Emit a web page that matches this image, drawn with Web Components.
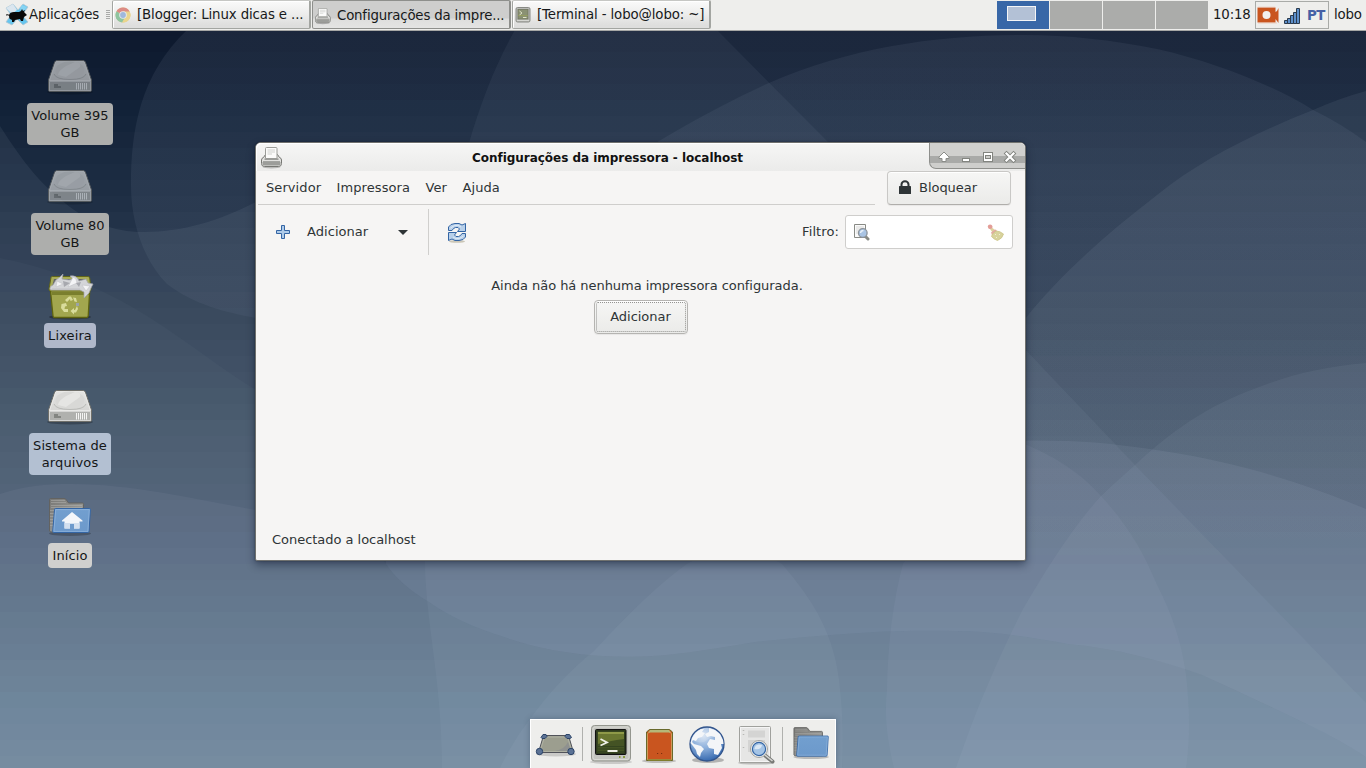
<!DOCTYPE html>
<html lang="pt-BR">
<head>
<meta charset="utf-8">
<title>Xfce</title>
<style>
html,body{margin:0;height:100%;overflow:hidden}
body{font:13.333px/17px "DejaVu Sans",sans-serif;color:#2e3436}
</style>
</head>
<body>
<xfce-desktop></xfce-desktop>
<script>
const define = (tag, css, html, setup) => {
  const t = document.createElement('template');
  t.innerHTML = `<style>*{box-sizing:border-box}${css}</style>${html}`;
  customElements.define(tag, class extends HTMLElement {
    constructor() {
      super();
      this.attachShadow({mode: 'open'}).append(t.content.cloneNode(true));
    }
    connectedCallback() { if (setup) setup.call(this, this.shadowRoot); }
  });
};

const drive = `
<defs><linearGradient id="t" x1="0" y1="0" x2="0" y2="1"><stop offset="0" stop-color="#e4e4e2"/><stop offset="1" stop-color="#cfcfcd"/></linearGradient></defs>
<ellipse cx="24" cy="39" rx="23" ry="2.500" fill="#000" opacity=".25"/>
<path d="M11 7.500H37Q38.600 7.500 39.300 9L45.500 27V37Q45.500 38.500 44 38.500H4Q2.500 38.500 2.500 37V27L8.700 9Q9.400 7.500 11 7.500Z" fill="url(#t)" stroke="#6f6f6a"/>
<path d="M11 8.500H37Q38 8.500 38.400 9.800L44.400 27.500H3.600L9.600 9.800Q10 8.500 11 8.500Z" fill="none" stroke="#e9e9e7"/>
<path d="M3 28.500H45V38H3Z" fill="#b0b1ae"/><path d="M3.500 28.500H44.500V37.500H3.500Z" fill="none" stroke="#d6d6d4"/>
<path d="M8 21Q10 26.500 24 26.500T40 21" fill="none" stroke="#b9bab7"/>
<ellipse cx="24" cy="17" rx="14.500" ry="8.500" fill="#d8d8d6"/>
<path d="M12 22Q12 18 20 13L29 9Q36 10 34 14L20 24Z" fill="#e9e9e7" opacity=".75"/>
<path d="M8 31h4v2h3v2H8z" fill="#838581"/><path d="M30.500 30v6.500M32.500 30v6.500M34.500 30v6.500M36.500 30v6.500M38.500 30v6.500M40.500 30v6.500" stroke="#f4f4f3"/>`;

const folder = extra => `
<defs><linearGradient id="f" x1="0" y1="0" x2="0" y2="1"><stop offset="0" stop-color="#729fcf"/><stop offset="1" stop-color="#6c99cb"/></linearGradient><linearGradient id="g" x1="0" y1="0" x2="1" y2="1"><stop offset="0" stop-color="#787875"/><stop offset="1" stop-color="#a8a8a5"/></linearGradient></defs>
<ellipse cx="24" cy="40.500" rx="21" ry="2.500" fill="#000" opacity=".22"/>
<path d="M3.500 38V6.500Q3.500 5.500 4.500 5.500H18Q19.500 5.500 20.500 7L22.500 10H36.500Q37.500 10 37.500 11.500V39H6Q3.500 39 3.500 38Z" fill="url(#g)" stroke="#636361"/>
<path d="M5 7.500H19M5 9.500H20M5 12.500H36M5 14.500H36M4 17.500H9M4 20.500H9M4 23.500H9M4 26.500H8M4 29.500H8M4 32.500H8" stroke="#b9b9b6" opacity=".45"/>
${extra}`;
const blueFront = `<path d="M9.500 15.500H43.500Q44.500 15.500 44.400 16.500L43 38.500Q42.800 39.500 41.800 39.500H7.600Q6.600 39.500 6.700 38.500L8.500 16.500Q8.600 15.500 9.500 15.500Z" fill="url(#f)" stroke="#3465a4"/><path d="M9.700 16.600H43.300L41.900 38.400H7.900Z" fill="none" stroke="#8fb4dc" stroke-width=".8"/>`;

const printer = `
<ellipse cx="10.500" cy="20" rx="9" ry="1.500" fill="#000" opacity=".22"/>
<path d="M4.500 7.500H16.500L18.500 10.500Q20.500 11 20.500 13V16.500Q20.500 19.500 17.500 19.500H3.500Q.5 19.500 .5 16.500V13Q.5 11 2.500 10.500Z" fill="#e2e2e0" stroke="#767773"/>
<path d="M1.500 15H19.500V16.500Q19.500 18.500 17.500 18.500H3.500Q1.500 18.500 1.500 16.500Z" fill="#9c9d9a"/><path d="M2 14.500H19" stroke="#777874" stroke-width=".6"/>
<path d="M3.500 11.500H17.500V12.800H3.500Z" fill="#8a8b87"/>
<path d="M4.500 11.500V1.500Q4.500 .5 5.500 .5H15Q16 .5 16 1.500V11.500Z" fill="#fbfbfa" stroke="#9b9c98"/>
<path d="M6.500 3H14M6.500 5H14M6.500 7H11" stroke="#d0d1ce"/>`;

const ICONS = {
  drive: [48, 48, drive],
  trash: [48, 48, `
<ellipse cx="24" cy="44" rx="21" ry="2.500" fill="#000" opacity=".3"/>
<path d="M4 13L7 43Q7.200 44.500 8.500 44.500H40.500Q42 44.500 42.200 43L44 13Z" fill="#a2a64e" stroke="#5f6310" stroke-width="1.300"/>
<path d="M5.500 19H43L42.600 22H6Z" fill="#7a7f2d"/>
<path d="M3 16L5 4.500Q5.200 3.500 6.500 3.500H42Q43.500 3.500 43.700 5L45 16Q45.100 18 43.500 18H4.500Q2.800 18 3 16Z" fill="#a9ad58" stroke="#62661a"/>
<path d="M6 14L8 6H40L42 14Z" fill="#66676b"/>
<path d="M4 15Q4 13 7 12L10 7L14 4L17 1L16 6L23 7L27 6L24 3Q31 2 33 8L40 6L42 10L47 11L45 15L43 20L38 25L38 19L34 17H5Q3.500 16.500 4 15Z" fill="#d4d5d8" stroke="#a4a5aa" stroke-width=".7"/>
<path d="M11 8L17 11L10 14ZM27 4Q31 5 31 10L22 14ZM36 12L44 13L40 18ZM6 15.500H34" fill="#f4f4f6" stroke="#c2c3c8" stroke-width=".6"/><path d="M17 8L24 10L18 14ZM30 10L35 9L33 14Z" fill="#a7a8ae"/>
<g fill="#d9dc9b"><path d="M19 27L23 23.500H25L27 27L24.500 28L24 26L21 29Z"/><path d="M27 24.500L30 25L31 29L28.500 28.500Z"/><path d="M15.500 31L20 30L21 33L19 33.500L18.500 36H22V39H18L15 35Z"/><path d="M31 33L32 36L30 39.500H28V41.500L24.500 38L28 35V37H29Z"/></g><path d="M30 30h3v3h-3z" fill="#9aa2a8"/>`],
  home: [48, 48, folder(blueFront + `<path d="M26 19L16 27.500V28.500H18.500V35.500H24V31H28V35.500H33.500V28.500H36.500V27.500Z" fill="#f3f6fa"/><path d="M18.500 30V35.500H24V31H28V35.500H33.500V30" fill="#d3e0ef"/>`)],
  folder: [48, 48, folder(blueFront)],
  printer: [22, 22, printer],
  mouse: [24, 24, `
<path d="M1 5L8 1L13 7L18 1L23 4L17 12L23 19L18 22L12 16L7 22L1 19L6 12Z" fill="#66c5ee" stroke="#b5c7d0" stroke-width=".8"/>
<path d="M1 5L8 1L12 7L7 11Z" fill="#dbe6ef"/><path d="M17 2L22 4L18 9L15 6Z" fill="#86d4f3"/>
<path d="M4 12Q5 9 9 9H14L16 8L17 6L18 8L20 7L19 9L22 12L19 14L18 18H16L15 16L10 17L9 19H7L7 17L5 16Q4 15 4 12Z" fill="#090909"/><path d="M5 13Q3 11 1 12" fill="none" stroke="#111"/>`],
  chrome: [16, 16, `
<circle cx="8" cy="8" r="7.500" fill="#e5d28d"/><path d="M1.500 4.200A7.500 7.500 0 0 0 7.200 15.500L10.500 9.500L8 8Z" fill="#8fc4a0"/><path d="M14.600 4.500A7.500 7.500 0 0 1 7.200 15.500L11 9V4.500Z" fill="#ead58d"/><path d="M8 8L1.500 4.200A7.500 7.500 0 0 1 14.600 4.500H8Z" fill="#dc8b84"/><circle cx="8" cy="8" r="3.800" fill="#e7ebee"/><circle cx="8" cy="8" r="2.900" fill="#9fb8dc"/>`],
  termsmall: [16, 16, `
<rect x="1" y=".5" width="14" height="14.500" rx="1.500" fill="#b9bab6" stroke="#888a85"/><rect x="3" y="2.500" width="10" height="9.500" fill="#8a9173" stroke="#70765f" stroke-width=".8"/><path d="M4.500 4L7 6L4.500 8M8 10.500H11.500" fill="none" stroke="#dfe3c6"/><path d="M3 8h10v1H3z" fill="#9aa355" opacity=".6"/><path d="M2 13.500H14" stroke="#d6d7d3"/>`],
  camera: [22, 18, `
<path d="M.5 1.500H18.500L18.500 6L20 5L21.500 2V17L18.500 13V16.500H.5Z" fill="#c9551f"/><circle cx="9.500" cy="9" r="4" fill="#f2efed"/><path d="M1 1.200H18M1 17H20" stroke="#e7b9a6" stroke-width=".6"/>`],
  signal: [18, 18, `
<g fill="#5d8fca" stroke="#2b3a4c"><path d="M1.500 13.500h3v3h-3zM4.500 11.500h3v5h-3zM7.500 8.500h3v8h-3zM10.500 5.500h3v11h-3zM13.500 1.500h3v15h-3z"/></g>`],
  plus: [16, 16, `<path d="M6.500 1.500H9.500V6.500H14.500V9.500H9.500V14.500H6.500V9.500H1.500V6.500H6.500Z" fill="#aecbe9" stroke="#3465a4"/>`],
  refresh: [20, 21, `
<ellipse cx="10" cy="19.500" rx="8" ry="1.300" fill="#7a7042" opacity=".35"/>
<g fill="#b8d0ea" stroke="#3465a4" stroke-linejoin="round"><path d="M1.500 8.500V5L4 2.500L8 1.500H12L15 3L18.500 1.500V9.500H10.500L12.500 7L11 5.500H8.500L6.500 6.500L5 8.500Z"/><path d="M18.500 11.500V15L16 17.500L12 18.500H8L5 17L1.500 18.500V10.500H9.500L7.500 13L9 14.500H11.500L13.500 13.500L15 11.500Z"/></g><path d="M3.500 6Q7 2.800 11 3.300L14 5M16.500 14Q13 17.200 9 16.700L6 15" fill="none" stroke="#e0ebf6"/>`],
  find: [17, 17, `
<path d="M1.500 .500H12.500V13.500H1.500Z" fill="#fafafa" stroke="#888a85"/><path d="M3 3H11M3 5H11M3 7H7M3 9H7" stroke="#d9d9d7"/>
<path d="M13 13L15 15" stroke="#888a85" stroke-width="3" stroke-linecap="round"/><circle cx="9.800" cy="9" r="4.300" fill="#a9c4e4" stroke="#8b939b" stroke-width="1.300"/><path d="M7.500 9A3 3 0 0 1 10.500 6.500" stroke="#e9f1f9" fill="none" stroke-width="1.400"/>`],
  broom: [17, 17, `
<path d="M.8 2.500Q.8 .5 3 .5Q5.500 .5 5.500 3L5 5L2.500 5Q.8 4.500 .8 2.500Z" fill="#e39d97"/><path d="M3 5L5.500 4L8 6L5.500 8.500Z" fill="#ddd19f"/><path d="M4 8.500L8 5.500L9.500 6L9.500 8L5 11Z" fill="#e2aaa1"/><path d="M5.500 10L9 7Q13 7 16.500 10Q15.500 14.500 10.500 16.500Q7 15.500 4.500 12.500Z" fill="#d8d39d" stroke="#cbc486" stroke-width=".8"/><path d="M8 10l1 1M12 10l1 1M9 13l1 1" stroke="#f1eed2"/>`],
  lock: [14, 15, `<path d="M3.500 7V4.500a3.500 3.200 0 0 1 7 0V7" fill="none" stroke="#2e3436" stroke-width="2"/><rect x="1" y="6" width="12" height="8" rx=".6" fill="#2e3436"/>`],
  desktop: [44, 30, `
<ellipse cx="21" cy="24" rx="20" ry="2.500" fill="#000" opacity=".15"/>
<path d="M8.500 5.500H33.500L38.500 22.500H3.500Z" fill="#9c9e8f" stroke="#51535a"/><path d="M9.500 7H32.500L37 21.500H5Z" fill="none" stroke="#b0b2a4"/><path d="M33 12Q30 19 20 21H36Z" fill="#8f918f"/>
<g fill="#5b7295" stroke="#2c4468"><path d="M6 7.500L8 4.500H11L12 6.500L10 8.500H7Z"/><path d="M30 6.500L31 4.500H34.500L36.500 7.500L35 8.500H32Z"/><circle cx="4.500" cy="21.500" r="3.200"/><circle cx="36" cy="21.500" r="3.200"/></g>`],
  terminal: [44, 44, `
<ellipse cx="22" cy="40" rx="21" ry="2" fill="#000" opacity=".15"/>
<rect x="2.500" y="3.500" width="39" height="35.500" rx="3" fill="#c4c5c0" stroke="#94968f"/><rect x="4" y="5" width="36" height="32.500" rx="2" fill="none" stroke="#d9dad5"/>
<rect x="6.500" y="7.500" width="30.500" height="25" rx="1" fill="#2d3a1d" stroke="#111"/><rect x="8.500" y="9.500" width="26.500" height="21" fill="#445324"/>
<path d="M9 10H35L35 17Q20 19 9 22Z" fill="#6a7731"/><path d="M9 10H35V12H9Z" fill="#8f9a48"/><path d="M9 24.500H35M9 27H35M9 29.500H35" stroke="#34441f"/>
<path d="M11.500 17L18 20.500L11.500 23.500" fill="none" stroke="#eef0e6" stroke-width="1.800"/><path d="M18.500 29H28.500" stroke="#eef0e6" stroke-width="2"/><path d="M30 35h1.500M34 35h2" stroke="#8b9b41" stroke-width="2"/>`],
  cabinet: [36, 40, `
<ellipse cx="18" cy="36" rx="17" ry="2" fill="#000" opacity=".2"/>
<path d="M5.500 35.500V7L8.500 4.500H28.500L31.500 7V35.500Z" fill="#c9551f" stroke="#686a2c"/><path d="M6.500 34.500V8.500L9.500 6.500H27.500L30.500 8.500V34.500Z" fill="none" stroke="#cf9a58"/><path d="M9 5L28 5L30 7.500H7Z" fill="#b5b778"/><path d="M7 35H30" stroke="#87852f" stroke-width="1.500"/><path d="M16 28.500h1.200M20 28.500h1.200" stroke="#7b2f0e"/>`],
  globe: [40, 42, `
<defs><radialGradient id="s" cx=".4" cy=".25" r=".8"><stop offset="0" stop-color="#d6e2f2"/><stop offset=".45" stop-color="#8fb1dc"/><stop offset="1" stop-color="#2d62ab"/></radialGradient></defs>
<ellipse cx="21" cy="36" rx="16" ry="3" fill="#000" opacity=".25"/><circle cx="20" cy="20" r="17" fill="url(#s)" stroke="#33558c" stroke-width="1.300"/>
<path d="M5 14Q8 8 14 5L17 5L15 8L18 9L15 13L11 14L9 17L6 16L5 18L7 20L14 22L17 25L14 29L13 33L10 30L9 26L6 22L3.500 19Z" fill="#f3f5f8"/><path d="M22 4L28 6L33 10L36 16L36.500 20L34 20L35 24L31 31L27 30L27 25L22 24L20 20L23 15L28 16L28 13L24 12L20 13L18 10L22 8Z" fill="#f3f5f8"/><path d="M5 16Q14 21 20 16Q28 10 35 14L31 8Q20 0 9 8Z" fill="#fff" opacity=".15"/>`],
  search: [44, 44, `
<ellipse cx="22" cy="40" rx="18" ry="1.600" fill="#000" opacity=".2"/>
<rect x="5.500" y="3.500" width="31" height="36" rx="1" fill="#e6e6e5" stroke="#a0a19d"/><rect x="6.500" y="4.500" width="29" height="34" fill="none" stroke="#f5f5f5"/>
<path d="M14 7.500h17v7H14zM14 17h7v12h-7zM21 17h10v2H21z" fill="#d4d4d3"/><path d="M9.500 7v1M9.500 11v1M9.500 24v1" stroke="#b9b9b6" stroke-width="1.500"/>
<path d="M30.500 32L38.500 38.500" stroke="#777975" stroke-width="4" stroke-linecap="round"/><path d="M31 32L38.500 38" stroke="#d6d6d4" stroke-width="1.600"/>
<circle cx="25" cy="26" r="8.500" fill="#f2f2f0" stroke="#a3a4a1"/><circle cx="25" cy="26" r="6.600" fill="#a4c4e6" stroke="#3465a4" stroke-width="1.200"/><path d="M20.500 26A5 5 0 0 1 25 21.500L28 22Q27 27.500 20.500 26Z" fill="#dbe8f5"/>`],
  shade: [14, 14, `<path d="M7 2L12 7V8.500H9V11.500H5V8.500H2V7Z" fill="#fff" stroke="#8a8c88" stroke-linejoin="round"/>`],
  minimize: [14, 14, `<rect x="3.500" y="8.500" width="7" height="3" fill="#fff" stroke="#82847f"/>`],
  maximize: [14, 14, `<rect x="2.500" y="2.500" width="9" height="9" fill="#fff" stroke="#82847f"/><rect x="4.500" y="5.500" width="5" height="3" fill="#cfcfcc" stroke="#82847f"/>`],
  close: [14, 14, `<path d="M3.500 3.500L10.500 10.500M10.500 3.500L3.500 10.500" stroke="#82847f" stroke-width="4" stroke-linecap="square"/><path d="M3.500 3.500L10.500 10.500M10.500 3.500L3.500 10.500" stroke="#fff" stroke-width="2.200" stroke-linecap="square"/>`],
  arrow: [12, 8, `<path d="M1 1H11L6 6Z" fill="#2e3436"/>`]
};

define('sys-icon', `:host{display:block;flex:none}svg{display:block}`, ``, function (root) {
  const [w, h, body] = ICONS[this.getAttribute('name')];
  const k = +(this.getAttribute('scale') || 1);
  root.innerHTML += `<svg width="${w * k}" height="${h * k}" viewBox="0 0 ${w} ${h}">${body}</svg>`;
});

define('desk-wallpaper', `:host{display:block;width:1366px;height:768px}svg{display:block}`, `
<svg width="1366" height="768" viewBox="0 0 1366 768">
<defs>
<linearGradient id="fade" gradientUnits="userSpaceOnUse" x1="0" y1="180" x2="0" y2="555"><stop offset="0" stop-color="#c4d0e8"/><stop offset="1" stop-color="#c4d0e8" stop-opacity="0"/></linearGradient>
<linearGradient id="rise" x1="0" y1="0" x2="0" y2="1"><stop offset="0" stop-color="#c6d4e8" stop-opacity="0"/><stop offset="1" stop-color="#c6d4e8" stop-opacity=".06"/></linearGradient>
</defs>
<g id="bands"></g>
<rect x="1020" y="330" width="346" height="225" fill="url(#rise)"/>
<path fill="url(#fade)" opacity=".075" d="M187 30C140 75 131 130 131 185C131 225 145 262 167 284C195 305 225 312 256 318L300 560H1366V30Z"/>
<path fill="url(#fade)" opacity=".065" d="M600 180C640 150 710 110 769 83C850 48 935 35 1023 35C1070 35 1110 40 1157 49C1215 62 1275 86 1313 110Q1340 123 1366 142V560H600Z"/>
<g fill="#c6d4e6">
<path opacity=".075" d="M0 126C25 165 40 182 58 197C85 222 115 232 143 232C185 232 220 220 256 202L1025 319C1060 275 1105 235 1157 195C1200 160 1255 133 1313 110Q1340 98 1366 91V768H0Z"/>
<path opacity=".03" d="M0 258C50 268 95 285 134 308C180 335 215 365 256 390L386 564Q400 585 429 602C450 617 475 628 504 637C535 648 570 654 603 656C625 657 645 657 666 655C695 652 725 647 755 642C785 639 815 636 845 634C880 631 915 630 956 631C990 631 1030 637 1068 644C1115 648 1160 660 1202 675C1240 692 1278 710 1313 727Q1340 740 1366 757V768H0Z"/>
<path opacity=".06" d="M0 494C25 486 45 484 71 484C130 484 190 498 256 510L300 555H1366V768H0Z"/>
<path opacity=".055" d="M515 30C495 65 480 105 469 143L425 560C425 620 442 680 442 768H1366V703L1135 465L828 142L717 30Z"/>
<path opacity=".065" d="M1366 363C1320 367 1285 376 1246 392C1200 410 1165 437 1135 465Q1118 480 1101 496C1068 533 1045 572 1023 609C997 660 975 712 956 768H1366Z"/>
<path opacity=".085" d="M1000 441Q1034 440 1068 441C1095 442 1112 444 1135 447C1175 452 1212 459 1246 468C1292 480 1330 494 1366 509V757Q1340 740 1313 727C1278 710 1240 692 1202 675C1160 660 1115 648 1068 644C1030 637 990 631 956 631C915 630 880 631 845 634C815 636 785 639 755 642C725 647 695 652 666 655C645 657 625 657 603 656C570 654 535 648 504 637C475 628 450 617 429 602Q400 585 386 564V500Z"/>
<path opacity=".06" d="M1000 430L1025 444C1055 457 1080 472 1101 496C1125 522 1143 550 1157 585C1173 615 1182 645 1186 675C1190 710 1190 740 1186 768H894C885 730 885 710 887 689Q888 620 903 564Z"/>
<path opacity=".065" d="M500 768Q512 742 530 719C548 694 570 670 594 651Q650 590 687 564Q735 535 782 564Q806 592 818 614C832 640 838 665 840 689Q844 725 842 768Z"/>
</g></svg>`, function (root) {
  const stops = [[30,14,25,46],[90,17,32,54],[150,25,41,63],[230,36,52,74],[330,50,66,87],[430,64,81,102],[520,75,93,116],[620,86,108,131],[700,97,121,143],[768,106,130,150]];
  let out = '';
  for (let y = 20; y < 768; y += 16) {
    let i = 0;
    while (i < stops.length - 2 && stops[i + 1][0] < y) i++;
    const a = stops[i], b = stops[i + 1];
    const t = Math.min(1, Math.max(0, (y - a[0]) / (b[0] - a[0])));
    const c = [1, 2, 3].map(n => Math.round(a[n] + (b[n] - a[n]) * t));
    out += `<rect y="${y}" width="1366" height="17" fill="rgb(${c})"/>`;
  }
  root.querySelector('#bands').innerHTML = out;
});

define('task-button', `
:host{display:flex;width:199px;height:29px;margin-right:1px;padding:5px 0 0 2px;gap:6px;border:1px solid #a3a5a1;border-top-color:#c6c7c4;border-right-width:2px;border-radius:2px;background:linear-gradient(#fafafa,#ededec 48%,#dededd 90%);box-shadow:inset 1px 1px #fff;white-space:nowrap;letter-spacing:-.11px;color:#17191a}
:host([active]){background:linear-gradient(#cececd 62%,#dededd 68%,#e4e4e3);box-shadow:none;border-color:#8e8f8c;padding-top:6px;letter-spacing:-.18px}
sys-icon{width:16px;height:16px;margin-top:1px}
`, `<span><slot></slot></span>`, function (root) {
  const icon = document.createElement('sys-icon');
  icon.setAttribute('name', this.getAttribute('icon'));
  if (this.getAttribute('icon') === 'printer') icon.setAttribute('scale', '.75');
  root.querySelector('span').before(icon);
});

define('workspace-pager', `
:host{display:flex;gap:1px;height:28px}
i{display:block;width:52px;background:#abacaa;padding:5px 0 0 10px}i:first-of-type{background:#3867a7}
b{display:block;width:29px;height:15px;background:#b3c1d6;border:1px solid #f4f5f7}`, `<i><b></b></i><i></i><i></i><i></i>`);

define('top-panel', `
:host{display:flex;align-items:flex-start;height:31px;background:#eeeeec;border-bottom:1px solid #a6a7a5;color:#17191a;box-sizing:border-box}
.apps{display:flex;width:112px;padding:3px 0 0 5px}.apps span{padding:3px 0 0 0;width:77px;letter-spacing:-.1px}
.grip{width:4px;height:10px;margin-top:7px;background:repeating-linear-gradient(#a9aaa8 0 1px,transparent 1px 2px)}
workspace-pager{margin:1px 5px 0 auto}
.t{padding-top:6px;letter-spacing:-.15px;width:42px}
.tray{display:flex;width:74px;height:28px;margin:1px 5px 0 0;border:1px solid #a9aba8;padding:4px 0 0 1px}
.tray sys-icon+sys-icon{margin:1px 0 0 4px}
.tray b{margin:1px 0 0 6px;color:#4560a5;letter-spacing:-.4px}
.u{width:32px;white-space:nowrap}
`, `
<div class="apps"><sys-icon name="mouse"></sys-icon><span>Aplicações</span><div class="grip"></div></div>
<task-button icon="chrome">[Blogger: Linux dicas e ...</task-button>
<task-button icon="printer" active>Configurações da impre...</task-button>
<task-button icon="termsmall">[Terminal - lobo@lobo: ~]</task-button>
<workspace-pager></workspace-pager>
<span class="t">10:18</span>
<div class="tray"><sys-icon name="camera"></sys-icon><sys-icon name="signal"></sys-icon><b>PT</b></div>
<span class="t u">lobo</span>`);

define('desktop-icon', `
:host{display:flex;flex-direction:column;align-items:center;width:110px;height:110px;text-align:center;color:#141617;font-size:13px;letter-spacing:.12px}
:host([dim]){letter-spacing:0}
.i{height:52px;padding-top:2px}:host([dim]) .i{opacity:.66}
.l{padding:4px 4px;border-radius:4px;background:var(--label,#b1bacb);line-height:17px;white-space:pre-line}
`, `<div class="i"></div><div class="l"><slot></slot></div>`, function (root) {
  root.querySelector('.i').innerHTML = `<sys-icon name="${this.getAttribute('icon')}"></sys-icon>`;
});

define('gtk-button', `
:host{display:flex;align-items:center;border:1px solid #c9c8c6;border-bottom-color:#b0aeab;border-radius:4px;background:linear-gradient(#f6f6f5,#ececea 90%);box-shadow:0 1px 1px rgba(0,0,0,.06),inset 0 1px #fff}`, `<slot></slot>`);

define('app-window', `
:host{display:flex;flex-direction:column;width:771px;height:419px;border:1px solid #70716e;border-radius:6px 6px 2px 2px;background:#f6f5f4;box-shadow:0 4px 9px rgba(5,14,35,.42),0 0 2px rgba(0,0,0,.4);box-sizing:border-box;font-size:13px;letter-spacing:-.03px}
header{display:flex;height:28px;background:linear-gradient(#f6f6f5,#ebebea);border-radius:5px 5px 0 0;box-shadow:inset 1px 1px #fff}
header>sys-icon{margin:4px 0 0 5px}
h1{margin:7px 0 0;flex:1;text-align:center;text-indent:3px;font:bold 12px/17px "DejaVu Sans",sans-serif;color:#111}
.ctl{display:flex;gap:8px;width:96px;height:26px;padding:7px 0 0 7px;border:1px solid #8e8f8c;border-width:0 0 1px 1px;border-radius:0 5px 0 7px;background:linear-gradient(#d0d0ce 54%,#a9aaa8 54% 82%,#cececc 82%)}
.menu{display:flex;height:34px}
nav{display:flex;width:617px;height:34px;margin-left:2px;padding:8px 0 0 8px;gap:15.500px;border-bottom:1px solid #cfcecc;letter-spacing:.08px}
.lock{width:124px;height:34px;margin:0 0 0 12px;padding:0 0 2px 10px;gap:7px}
.bar{display:flex;height:55px;padding-left:19px}
.bar>.p{margin-top:19px}.bar>.add{margin:18px 0 0 16px;width:90px;letter-spacing:.05px}.bar>.ar{margin-top:24px}
.sep{width:1px;height:46px;margin:4px 0 0 19px;background:#d0cfcd}
.bar>.re{margin:17px 0 0 18px}
.fl{margin:18px 6px 0 auto;letter-spacing:.1px}
.entry{display:flex;justify-content:space-between;width:168px;height:34px;margin:10px 12px 0 0;padding:8px 8px 0 7px;border:1px solid #cfcecc;border-radius:3px;background:#fff}
main{display:flex;flex-direction:column;align-items:center;flex:1;padding-top:17px}
main span{padding-left:13px;letter-spacing:-.05px}
main gtk-button{width:94px;height:34px;margin-top:6px;padding-bottom:2px;justify-content:center;position:relative;border-color:#b5b4b1}
main gtk-button::before{content:"";position:absolute;inset:1px;border:1px dotted #8a8a87;border-radius:2px;opacity:.9}
footer{padding:0 0 12px 16px}
`, `
<header><sys-icon name="printer"></sys-icon><h1>Configurações da impressora - localhost</h1><div class="ctl"><sys-icon name="shade"></sys-icon><sys-icon name="minimize"></sys-icon><sys-icon name="maximize"></sys-icon><sys-icon name="close"></sys-icon></div></header>
<div class="menu"><nav><span>Servidor</span><span>Impressora</span><span>Ver</span><span>Ajuda</span></nav>
<gtk-button class="lock"><sys-icon name="lock"></sys-icon><span>Bloquear</span></gtk-button></div>
<div class="bar"><sys-icon class="p" name="plus"></sys-icon><span class="add">Adicionar</span><sys-icon class="ar" name="arrow"></sys-icon><div class="sep"></div><sys-icon class="re" name="refresh"></sys-icon>
<span class="fl">Filtro:</span><div class="entry"><sys-icon name="find"></sys-icon><sys-icon name="broom"></sys-icon></div></div>
<main><span>Ainda não há nenhuma impressora configurada.</span><gtk-button>Adicionar</gtk-button></main>
<footer>Conectado a localhost</footer>`);

define('launch-dock', `
:host{display:flex;width:306px;height:49px;padding-left:4px;border:1px solid #fff;border-bottom:0;background:#eeeeec;box-shadow:0 0 6px rgba(20,35,60,.3);box-sizing:border-box}
hr{flex:none;width:1px;height:34px;margin:7px 0 0;border:0;background:#b0b1ae}
`, `
<sys-icon name="desktop" style="margin:10px 3px 0 0"></sys-icon><hr>
<sys-icon name="terminal" style="margin:2px 0 0 6px"></sys-icon>
<sys-icon name="cabinet" style="margin:5px 0 0 8px"></sys-icon>
<sys-icon name="globe" style="margin:4px 0 0 10px"></sys-icon>
<sys-icon name="search" style="margin:3px 0 0 7px"></sys-icon><hr style="margin-left:4px">
<sys-icon name="folder" scale=".84" style="margin:3px 0 0 8px"></sys-icon>`);

define('xfce-desktop', `
:host{display:block;position:relative;width:1366px;height:768px;overflow:hidden}
desk-wallpaper,top-panel,desktop-icon,app-window,launch-dock{position:absolute}
top-panel{left:0;top:0;width:1366px}
desktop-icon{left:15px}
app-window{left:255px;top:142px}
launch-dock{left:530px;top:719px}
`, `
<desk-wallpaper></desk-wallpaper>
<desktop-icon icon="drive" dim style="top:51px;--label:#adaeac">Volume 395
GB</desktop-icon>
<desktop-icon icon="drive" dim style="top:161px;--label:#adaeac">Volume 80
GB</desktop-icon>
<desktop-icon icon="trash" style="top:271px;--label:#b0b8ca">Lixeira</desktop-icon>
<desktop-icon icon="drive" style="top:381px;--label:#b3c0d2">Sistema de
arquivos</desktop-icon>
<desktop-icon icon="home" style="top:491px;--label:#d0d0ce">Início</desktop-icon>
<app-window></app-window>
<launch-dock></launch-dock>
<top-panel></top-panel>`);
</script>
</body>
</html>
